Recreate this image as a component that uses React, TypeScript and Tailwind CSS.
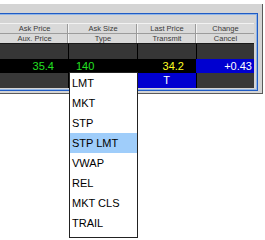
const cols = 'grid grid-cols-[76px_69px_59px_58px]';

const headers = [
  ['Ask Price', 'Aux. Price'],
  ['Ask Size', 'Type'],
  ['Last Price', 'Transmit'],
  ['Change', 'Cancel'],
];

const orderTypes = ['LMT', 'MKT', 'STP', 'STP LMT', 'VWAP', 'REL', 'MKT CLS', 'TRAIL'];

function HeaderRow({ row }: { row: number }) {
  return (
    <div className={`${cols} h-[9px] bg-[#d9d9d9]`}>
      {headers.map((h, i) => (
        <div
          key={h[row]}
          className={`flex items-center justify-center text-[7.5px] leading-none text-[#3a3a3a] ${
            i === 0 ? 'pl-[9px]' : 'border-l border-[#f4f4f4] shadow-[-1px_0_0_#9a9a9a]'
          }`}
        >
          {h[row]}
        </div>
      ))}
    </div>
  );
}

function App() {
  return (
    <div className="w-[265px] h-[240px] bg-white relative overflow-hidden font-['Liberation_Sans',Arial,sans-serif]">
      <div className="mt-[4px] ml-[-10px] w-[273px] bg-[#d4d4d4] border-r border-b border-[#5a5a5a] pt-[9px] pb-[2px] pr-[4px]">
        <div className="border border-[#1f5bc4]">
          <div className="border border-[#8fb4e6] pt-[8px] pb-[1px] pr-[2px]">
            <div className="w-[262px]">
              <div className="h-px bg-[#f2f2f2]" />
              <HeaderRow row={0} />
              <div className="h-px bg-[#9c9c9c]" />
              <HeaderRow row={1} />
              <div className="h-px bg-[#1a1a1a]" />

              <div className={`${cols} h-[15px] bg-[#363636]`}>
                <div />
                <div className="border-l border-black" />
                <div className="border-l border-black" />
                <div className="border-l border-black" />
              </div>

              <div className={`${cols} h-[14px] bg-black text-[11px] leading-none`}>
                <div className="flex items-center justify-end pr-[14px] text-[#22e022]">35.4</div>
                <div className="flex items-center pl-[8px] text-[#22e022]">140</div>
                <div className="flex items-center justify-end pr-[12px] text-[#ffff22]">34.2</div>
                <div className="flex items-center justify-end pr-[2px] text-white bg-[#0000d0]">+0.43</div>
              </div>

              <div className={`${cols} h-[15px] bg-[#383838] text-[11px] leading-none`}>
                <div />
                <div className="border-l border-black" />
                <div className="flex items-center justify-center bg-[#0000d0] text-white">T</div>
                <div className="border-l border-black" />
              </div>
            </div>
          </div>
        </div>
      </div>

      <div className="absolute left-[69px] top-[72px] w-[69px] h-[166px] bg-white border border-[#222]">
        <div className="flex flex-col">
          {orderTypes.map((t) => (
            <div
              key={t}
              className={`h-[20px] flex items-center pl-[2px] text-[11px] leading-none text-black ${
                t === 'STP LMT' ? 'bg-[#9fcdfa]' : ''
              }`}
            >
              {t}
            </div>
          ))}
        </div>
      </div>
    </div>
  );
}

export default App;
